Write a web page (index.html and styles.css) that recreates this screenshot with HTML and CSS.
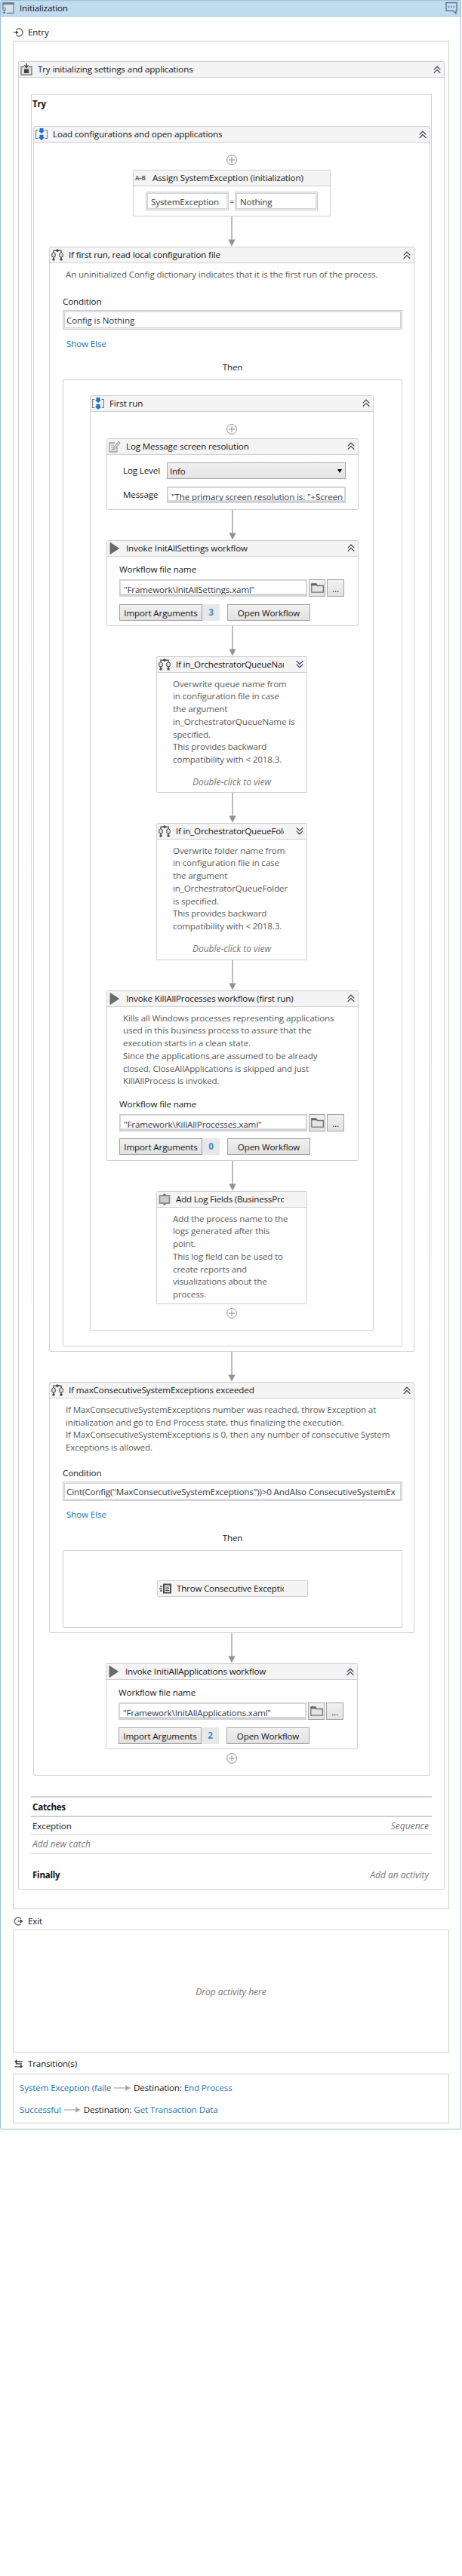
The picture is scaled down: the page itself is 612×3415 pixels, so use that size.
FILE: index.html
```html
<!DOCTYPE html>
<html lang="en">
<head>
<meta charset="utf-8">
<title>Initialization</title>
<link rel="stylesheet" href="styles.css">
</head>
<body>
<svg class="defs" width="0" height="0" aria-hidden="true">
  <defs>
    <symbol id="up" viewBox="0 0 10 11"><path d="M.7 5.4 5 1.2l4.3 4.2M.7 9.8 5 5.6l4.3 4.2" fill="none" stroke="#3d4658" stroke-width="1.2"/></symbol>
    <symbol id="down" viewBox="0 0 10 11"><path d="M.7 1.2 5 5.4l4.3-4.2M.7 5.6 5 9.8l4.3-4.2" fill="none" stroke="#3d4658" stroke-width="1.2"/></symbol>
    <symbol id="plus" viewBox="0 0 14 14"><circle cx="7" cy="7" r="6.4" fill="#fff" stroke="#8c8c8c"/><path d="M7 3v8M3 7h8" stroke="#8c8c8c"/></symbol>
    <symbol id="arrow" viewBox="0 0 10 40"><path d="M5 0v31" stroke="#999" stroke-width="1.3"/><path d="M.4 30.500h9.200L5 39.500z" fill="#929292"/></symbol>
    <symbol id="seq" viewBox="0 0 16 16"><path d="M3.500 2.500h-3v11h3M12.500 2.500h3v11h-3" fill="none" stroke="#7c7c7c" stroke-width="1.2"/><path d="M5.500 0h5v3.500h1.800L8 7 3.700 3.500h1.800zM5.500 8.800h5v3.200h1.800L8 16l-4.300-4h1.800z" fill="#1e74c8"/></symbol>
    <symbol id="if" viewBox="0 0 16 16"><path d="M3 5V2.200h10V5M3 10v3M13 10v3" fill="none" stroke="#444" stroke-width="1.3"/><path d="m3 4.500 2.200 1.500v4.200L3 11 .8 10.200V6zM13 4.500l2.200 1.500v4.200L13 11l-2.200-.8V6z" fill="#e2e2e2" stroke="#444"/><path d="M8 0 10.500 2.200 8 4.300 5.500 2.200z" fill="#444"/><circle cx="3" cy="13.900" r="1.700" fill="#444"/><circle cx="13" cy="13.900" r="1.700" fill="#444"/></symbol>
    <symbol id="play" viewBox="0 0 16 16"><path d="M2 .5 13.500 8 2 15.500z" fill="#6b6b6b" stroke="#6b6b6b" stroke-linejoin="round"/></symbol>
    <symbol id="try" viewBox="0 0 16 16"><path d="M5 4.500H1v10.700h14V4.500h-4" fill="#ddd" stroke="#808080" stroke-width="1.400"/><path d="M5 7.500h6v5.500H5z" fill="#444"/><path d="M8 0v5M5.300 2.500 8 5.300l2.700-2.800" fill="none" stroke="#444" stroke-width="1.500"/></symbol>
    <symbol id="log" viewBox="0 0 16 16"><path d="M11 9v6H1V3h7" fill="#eee" stroke="#999" stroke-width="1.300"/><path d="M3 6h4M3 9h2.500M3 12h2" stroke="#999"/><path d="M13.300 1.200 15.200 3 8 11.500l-2.500 1 .6-2.800z" fill="#ddd" stroke="#8a8a8a"/></symbol>
    <symbol id="field" viewBox="0 0 16 16"><rect x="1.500" y="3" width="13" height="10" fill="#ccc" stroke="#888" stroke-width="1.600"/><path d="M8 .2 11 2.500H5zM8 15.800l3-2.300H5z" fill="#666"/></symbol>
    <symbol id="throw" viewBox="0 0 16 16"><path d="M6 2.500h9v11H6z" fill="#eee" stroke="#4a4a4a" stroke-width="2"/><path d="M8 6h5M8 8.300h5M8 10.500h5" stroke="#4a4a4a" stroke-width="1.200"/><path d="M1 5h3M0 8h4M1 11h3" stroke="#4a4a4a" stroke-width="1.400"/></symbol>
    <symbol id="state" viewBox="0 0 16 16"><path d="M1 8V1h14v13.300H6" fill="#d3e2ee" stroke="#6d7880" stroke-width="1.200"/><path d="M.4.400h15.200V3H.4z" fill="#6d7880"/><circle cx="2.500" cy="9" r="1.700" fill="none" stroke="#6d7880" stroke-width="1.100"/><path d="M2.500 10.500v3" stroke="#6d7880"/><path d="M.5 13h4l-2 2.500z" fill="#6d7880"/></symbol>
    <symbol id="note" viewBox="0 0 16 16"><path d="M1 .7h14v10.600h-1V15l-4-3.700H1z" fill="none" stroke="#5b6e7e" stroke-width="1.300"/><path d="M3.500 6h1.800M7 6h1.800M10.500 6h1.800" stroke="#5b6e7e" stroke-width="1.600"/></symbol>
    <symbol id="entry" viewBox="0 0 13 12"><path d="M3.500 2.500a5 5 0 1 1 0 7" fill="none" stroke="#666" stroke-width="1.300"/><path d="M0 6h5" stroke="#444" stroke-width="1.300"/><path d="M3 3.300 6.500 6 3 8.700z" fill="#444"/></symbol>
    <symbol id="exit" viewBox="0 0 13 12"><path d="M9.800 2.500a5 5 0 1 0 0 7" fill="none" stroke="#666" stroke-width="1.300"/><path d="M5.500 6H10" stroke="#444" stroke-width="1.300"/><path d="M8.800 3.300 12.700 6 8.800 8.700z" fill="#444"/></symbol>
    <symbol id="trans" viewBox="0 0 12 12"><path d="M11 3H3v3h7.500M1 9.800h8" fill="none" stroke="#444" stroke-width="1.300"/><path d="M4 0v6L.5 3zM8.500 6.800v5.200L12 9.400z" fill="#444"/></symbol>
    <symbol id="link" viewBox="0 0 22 8"><path d="M0 4h16" stroke="#a6a6a6" stroke-width="1.200"/><path d="M15 .3 22 4l-7 3.700z" fill="#a6a6a6"/></symbol>
    <symbol id="folder" viewBox="0 0 17 13"><path d="M.8 1.500h6l1.500 2h8v8.700H.8z" fill="#e4e4e4" stroke="#757575" stroke-width="1.300"/><path d="M.2.300h7l1.600 2.900H.2z" fill="#666"/></symbol>
  </defs>
</svg>
<main class="state">
  <header class="head head-state"><svg class="ico"><use href="#state"/></svg><span class="title">Initialization</span><svg class="note"><use href="#note"/></svg></header>

  <div class="label entry"><svg><use href="#entry"/></svg>Entry</div>
  <section class="zone zone-entry">
    <article class="card trycatch">
      <header class="head"><svg class="ico"><use href="#try"/></svg><span class="title">Try initializing settings and applications</span><svg class="chev"><use href="#up"/></svg></header>
      <div class="trybox">
        <b class="trylabel">Try</b>
        <article class="card load">
          <header class="head"><svg class="ico"><use href="#seq"/></svg><span class="title">Load configurations and open applications</span><svg class="chev"><use href="#up"/></svg></header>
          <svg class="plus plus-first"><use href="#plus"/></svg>

          <article class="card assign">
            <header class="head"><span class="ico ab">A<i>+</i>B</span><span class="title">Assign SystemException (initialization)</span></header>
            <div class="assignrow"><span class="input">SystemException</span><span class="eq">=</span><span class="input">Nothing</span></div>
          </article>
          <svg class="arrow"><use href="#arrow"/></svg>

          <article class="card cond cond-run">
            <header class="head"><svg class="ico"><use href="#if"/></svg><span class="title">If first run, read local configuration file</span><svg class="chev"><use href="#up"/></svg></header>
            <p class="desc">An uninitialized Config dictionary indicates that it is the first run of the process.</p>
            <div class="caption">Condition</div>
            <div class="input cond-input">Config is Nothing</div>
            <a class="else">Show Else</a>
            <div class="then">Then</div>
            <div class="branch">
              <article class="card first">
                <header class="head"><svg class="ico"><use href="#seq"/></svg><span class="title">First run</span><svg class="chev"><use href="#up"/></svg></header>
                <svg class="plus"><use href="#plus"/></svg>

                <article class="card wide logmsg">
                  <header class="head"><svg class="ico"><use href="#log"/></svg><span class="title">Log Message screen resolution</span><svg class="chev"><use href="#up"/></svg></header>
                  <div class="form">
                    <span>Log Level</span><span class="select">Info</span>
                    <span>Message</span><span class="input low">"The primary screen resolution is: "+Screen</span>
                  </div>
                </article>
                <svg class="arrow"><use href="#arrow"/></svg>

                <article class="card wide invoke">
                  <header class="head"><svg class="ico"><use href="#play"/></svg><span class="title">Invoke InitAllSettings workflow</span><svg class="chev"><use href="#up"/></svg></header>
                  <div class="filelabel">Workflow file name</div>
                  <div class="filerow"><span class="input low">"Framework\InitAllSettings.xaml"</span><span class="btn pick"><svg><use href="#folder"/></svg></span><span class="btn dots">...</span></div>
                  <div class="buttons"><span class="btn act">Import Arguments</span><span class="badge">3</span><span class="btn act">Open Workflow</span></div>
                </article>
                <svg class="arrow"><use href="#arrow"/></svg>

                <article class="card narrow queue">
                  <header class="head"><svg class="ico"><use href="#if"/></svg><span class="title">If in_OrchestratorQueueName</span><svg class="chev"><use href="#down"/></svg></header>
                  <p class="desc">Overwrite queue name from<br>in configuration file in case<br>the argument<br>in_OrchestratorQueueName is<br>specified.<br>This provides backward<br>compatibility with &lt; 2018.3.</p>
                  <em class="view">Double-click to view</em>
                </article>
                <svg class="arrow"><use href="#arrow"/></svg>

                <article class="card narrow folder">
                  <header class="head"><svg class="ico"><use href="#if"/></svg><span class="title">If in_OrchestratorQueueFold</span><svg class="chev"><use href="#down"/></svg></header>
                  <p class="desc">Overwrite folder name from<br>in configuration file in case<br>the argument<br>in_OrchestratorQueueFolder<br>is specified.<br>This provides backward<br>compatibility with &lt; 2018.3.</p>
                  <em class="view">Double-click to view</em>
                </article>
                <svg class="arrow"><use href="#arrow"/></svg>

                <article class="card wide invoke kill">
                  <header class="head"><svg class="ico"><use href="#play"/></svg><span class="title">Invoke KillAllProcesses workflow (first run)</span><svg class="chev"><use href="#up"/></svg></header>
                  <p class="desc">Kills all Windows processes representing applications<br>used in this business process to assure that the<br>execution starts in a clean state.<br>Since the applications are assumed to be already<br>closed, CloseAllApplications is skipped and just<br>KillAllProcess is invoked.</p>
                  <div class="filelabel">Workflow file name</div>
                  <div class="filerow"><span class="input low">"Framework\KillAllProcesses.xaml"</span><span class="btn pick"><svg><use href="#folder"/></svg></span><span class="btn dots">...</span></div>
                  <div class="buttons"><span class="btn act">Import Arguments</span><span class="badge">0</span><span class="btn act">Open Workflow</span></div>
                </article>
                <svg class="arrow"><use href="#arrow"/></svg>

                <article class="card narrow fields">
                  <header class="head"><svg class="ico"><use href="#field"/></svg><span class="title">Add Log Fields (BusinessPro</span></header>
                  <p class="desc">Add the process name to the<br>logs generated after this<br>point.<br>This log field can be used to<br>create reports and<br>visualizations about the<br>process.</p>
                </article>
                <svg class="plus"><use href="#plus"/></svg>
              </article>
            </div>
          </article>
          <svg class="arrow"><use href="#arrow"/></svg>

          <article class="card cond cond-max">
            <header class="head"><svg class="ico"><use href="#if"/></svg><span class="title">If maxConsecutiveSystemExceptions exceeded</span><svg class="chev"><use href="#up"/></svg></header>
            <p class="desc">If MaxConsecutiveSystemExceptions number was reached, throw Exception at<br>initialization and go to End Process state, thus finalizing the execution.<br>If MaxConsecutiveSystemExceptions is 0, then any number of consecutive System<br>Exceptions is allowed.</p>
            <div class="caption">Condition</div>
            <div class="input cond-input">Cint(Config("MaxConsecutiveSystemExceptions"))&gt;0 AndAlso ConsecutiveSystemEx</div>
            <a class="else">Show Else</a>
            <div class="then">Then</div>
            <div class="branch">
              <article class="card throw">
                <header class="head"><svg class="ico"><use href="#throw"/></svg><span class="title">Throw Consecutive Exceptio</span></header>
              </article>
            </div>
          </article>
          <svg class="arrow"><use href="#arrow"/></svg>

          <article class="card wide invoke">
            <header class="head"><svg class="ico"><use href="#play"/></svg><span class="title">Invoke InitiAllApplications workflow</span><svg class="chev"><use href="#up"/></svg></header>
            <div class="filelabel">Workflow file name</div>
            <div class="filerow"><span class="input low">"Framework\InitAllApplications.xaml"</span><span class="btn pick"><svg><use href="#folder"/></svg></span><span class="btn dots">...</span></div>
            <div class="buttons"><span class="btn act">Import Arguments</span><span class="badge">2</span><span class="btn act">Open Workflow</span></div>
          </article>
          <svg class="plus"><use href="#plus"/></svg>
        </article>
      </div>
      <div class="catches">
        <div class="row row-head"><b>Catches</b></div>
        <div class="row"><span>Exception</span><em>Sequence</em></div>
        <div class="row row-new"><em>Add new catch</em></div>
        <div class="row row-finally"><b>Finally</b><em>Add an activity</em></div>
      </div>
    </article>
  </section>

  <div class="label exit"><svg><use href="#exit"/></svg>Exit</div>
  <section class="zone zone-exit"><em>Drop activity here</em></section>

  <div class="label transitions"><svg><use href="#trans"/></svg>Transition(s)</div>
  <section class="zone zone-trans">
    <div class="trow"><a>System Exception (faile</a><svg><use href="#link"/></svg><span>Destination: <a>End Process</a></span></div>
    <div class="trow"><a>Successful</a><svg><use href="#link"/></svg><span>Destination: <a>Get Transaction Data</a></span></div>
  </section>
</main>
</body>
</html>
```

FILE: styles.css
```css
* { box-sizing: border-box; }
body {
  margin: 0;
  background: #fff;
  color: #141414;
  font: 11.6px/16px "Open Sans", "Noto Sans", sans-serif;
  letter-spacing: -0.13px;
  white-space: nowrap;
}
.defs { display: block; position: absolute; }
svg { display: block; flex: none; }
b { font-size: 11.6px; letter-spacing: -0.25px; }
em { font-size: 12px; letter-spacing: 0; color: #777; }
a { color: #2172b8; }
p { margin: 0; }

.state { width: 611px; height: 2823px; border: 1px solid #9bc1dc; border-radius: 2px; }

/* Card header bars */
.head {
  display: flex;
  align-items: center;
  height: 21px;
  padding: 0 4px 0 2px;
  background: #f4f4f4;
  border-bottom: 1px solid #cfd0d2;
}
.head .ico { width: 16px; height: 16px; margin-right: 7px; flex: none; }
.head .title { flex: 1; min-width: 0; overflow: hidden; }
.head .chev { width: 10px; height: 11px; margin: 0 0 0 8px; }
.head .ab { font-size: 8px; font-weight: 700; letter-spacing: -0.5px; color: #666; }
.head .ab i { font-style: normal; font-size: 7px; }
.head-state { background: #c1dbee; border-color: #9bc1dc; }
.head-state .note { width: 16px; height: 16px; }

.label { display: flex; align-items: center; height: 16px; margin-left: 17px; gap: 6px; }
.label svg { width: 13px; height: 12px; }
.entry { margin-top: 13px; }
.exit { margin-top: 8px; }
.transitions { margin-top: 7px; }

.zone { width: 578px; margin: 3px 0 0 16px; border: 1px solid #cfd0d2; }
.zone-entry { height: 2477px; padding: 26px 0 0 6px; }
.zone-exit { height: 163px; display: flex; align-items: center; justify-content: center; padding-top: 2px; }
.zone-trans { height: 66px; margin-top: 5px; padding: 10px 0 0 8px; display: grid; gap: 13px; align-content: start; }
.trow { display: flex; align-items: center; height: 16px; gap: 4px; }
.trow svg { width: 22px; height: 8px; }

.card { border: 1px solid #cfd0d2; border-radius: 2px; background: #fff; }
.trycatch { width: 565px; height: 2424px; }

/* Try block: the side lines fade out towards the bottom */
.trybox {
  width: 531px;
  height: 2229px;
  margin: 22px 0 0 16px;
  padding: 4px 0 0 3px;
  border-top: 1px solid #cfd0d2;
  background:
    linear-gradient(#cfd0d2, #e4e4e4 60%, #fff 75%) left / 1px 100% no-repeat,
    linear-gradient(#cfd0d2, #e4e4e4 60%, #fff 75%) right / 1px 100% no-repeat;
}
.trylabel { display: block; height: 37px; margin-left: -1px; }
.load { width: 526px; height: 2187px; }
.plus { width: 14px; height: 14px; margin: 5px auto; }
.head + .plus { margin-top: 16px; }
.head + .plus-first { margin-bottom: 6px; }
.arrow { width: 10px; height: 40px; margin: 0 auto; }

.assign { width: 262px; height: 62px; margin: 0 auto; }
.assignrow { display: flex; justify-content: center; padding: 7px 0 0; }
.assignrow .input { width: 110px; height: 25px; }
.eq { width: 8px; text-align: center; line-height: 25px; }

.input {
  display: block;
  height: 26px;
  padding: 0 4px;
  border: 1px solid #cbccd0;
  box-shadow: inset 0 0 0 1px #ececef, inset 0 0 0 2px #d2d3d7;
  background: #fff;
  color: #2e3849;
  line-height: 26px;
  overflow: hidden;
}
.input.low { line-height: 25px; padding: 0 5px; border-bottom-width: 3px; border-bottom-color: #d2d3d7; box-shadow: inset 0 0 0 1px #d8d9dc; }
.assignrow .input { line-height: 26px; padding-left: 6px; }

.cond { width: 484px; margin: 0 auto; }
.cond-run { height: 1465px; }
.cond-max { height: 333px; }
.desc { padding: 7px 0 0 21px; line-height: 16.7px; color: #5a5a5a; }
.caption { margin: 19px 0 3px 17px; }
.cond-input { width: 450px; margin-left: 17px; }
.else { display: block; margin: 11px 0 15px 22px; }
.then { width: 450px; margin-left: 17px; text-align: center; }
.branch { width: 450px; margin: 8px 0 0 17px; border: 1px solid #cfd0d2; border-radius: 2px; }
.cond-run .branch { height: 1282px; padding: 20px 0 0 35px; }
.cond-max .caption { margin-top: 17px; }
.cond-max .else { margin-top: 10px; }
.cond-max .branch { height: 103px; padding: 39px 0 0 124px; }
.throw { width: 200px; }
.throw .head { height: 20px; border-bottom: 0; padding-right: 31px; }
.throw .title, .narrow .title { letter-spacing: -0.2px; }

.first { width: 376px; height: 1240px; }
.first > .arrow { margin-left: 183px; }
.wide { width: 334px; margin: 0 auto; }
.first > .wide { margin-left: 21px; }
.narrow { width: 200px; margin-left: 87px; }
.narrow .head .title { flex: none; width: 143px; }
.narrow .head .chev { margin-left: auto; }
.logmsg { height: 95px; }
.form {
  display: grid;
  grid-template-columns: 58px 237px;
  grid-auto-rows: 22px;
  row-gap: 10px;
  align-items: center;
  padding: 10px 0 0 21px;
}
.form .input, .select { height: 22px; }
.select {
  position: relative;
  padding-left: 3px;
  border: 1px solid #a5a5a5;
  background: linear-gradient(#f0f0f0, #e4e4e4);
  line-height: 22px;
}
.select::after {
  content: "";
  position: absolute;
  right: 4px;
  top: 8px;
  border: 3.5px solid transparent;
  border-top: 5px solid #000;
  border-bottom: 0;
}

.invoke { height: 114px; }
.filelabel { margin: 9px 0 5px 16px; }
.filerow { display: flex; height: 23px; margin-left: 16px; }
.filerow .input { width: 249px; height: 23px; }
.btn { border: 1px solid #a3a3a3; background: linear-gradient(#f1f1f1, #e1e1e1); }
.pick { width: 22px; margin: 0 2px; display: grid; place-items: center; }
.pick svg { width: 17px; height: 13px; }
.dots { width: 23px; text-align: center; line-height: 23px; }
.buttons { display: flex; margin: 10px 0 0 16px; height: 22px; text-align: center; }
.act { width: 110px; line-height: 22px; }
.badge { width: 23px; margin-right: 10px; background: #e8e8e8; color: #4389d6; font-weight: 700; line-height: 22px; }
.kill { height: 226px; }
.kill .filelabel { margin-top: 14px; }
.kill .buttons { margin-top: 9px; }

.queue { height: 181px; }
.folder { height: 182px; }
.fields { height: 150px; }
.view { display: block; margin-top: 13px; text-align: center; }

/* Catches and finally */
.catches { width: 531px; margin: 27px 0 0 16px; border-top: 2px solid #cfd0d2; }
.row { display: flex; align-items: center; justify-content: space-between; height: 23px; padding: 1px 4px 0 2px; border-bottom: 1px solid #cfd0d2; }
.row-head { height: 26px; border-bottom-width: 2px; }
.row-new { height: 26px; }
.row-finally { height: 46px; padding-top: 10px; border: 0; }
```
